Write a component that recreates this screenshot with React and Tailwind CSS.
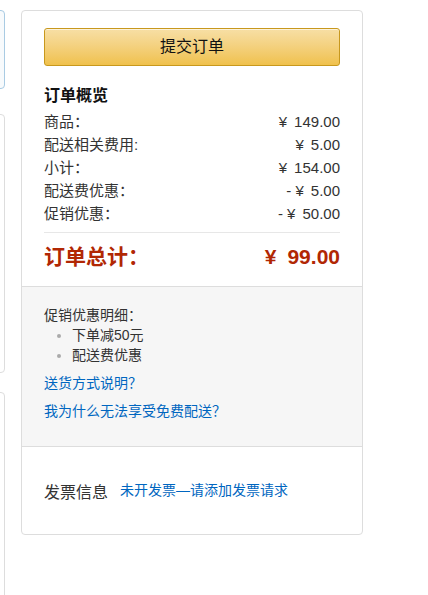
import React from 'react'

const rows = [
  ['商品：', '', '149.00'],
  ['配送相关费用:', '', '5.00'],
  ['小计：', '', '154.00'],
  ['配送费优惠：', '- ', '5.00'],
  ['促销优惠：', '- ', '50.00'],
]

const font = { fontFamily: '"Liberation Sans", Arial, "Noto Sans CJK SC", sans-serif' }

function SideBoxes() {
  return (
    <div className="flex w-[5px] shrink-0 flex-col">
      <div className="ml-[-195px] h-[79px] w-[200px] shrink-0 rounded-[4px] border border-[#a9cbe3] bg-[#f7fafc]" />
      <div className="ml-[-195px] mt-[25px] h-[259px] w-[200px] shrink-0 rounded-[4px] border border-[#dddddd] bg-white" />
      <div className="ml-[-195px] mt-[19px] h-[300px] w-[200px] shrink-0 rounded-[4px] border border-[#dddddd] bg-white" />
    </div>
  )
}

export default function App() {
  return (
    <div className="flex h-[595px] gap-[16px] overflow-hidden bg-white pt-[10px] text-[#333]" style={font}>
      <SideBoxes />
      <div className="h-fit w-[342px] shrink-0 overflow-hidden rounded-[4px] border border-[#dddddd]">
        <div className="px-[22px] pt-[17px] pb-[15px]">
          <button className="flex h-[38px] w-full items-center justify-center rounded-[3px] border border-[#c8981d] bg-gradient-to-b from-[#f7dfa5] to-[#f0c14b] text-[16px] text-[#111] shadow-[inset_0_1px_0_rgba(255,255,255,0.6)]">
            提交订单
          </button>
          <h3 className="mt-[18px] text-[16px] font-bold leading-[24px] text-[#111]">订单概览</h3>
          <div className="mt-[2px] text-[15px] leading-[23px]">
            {rows.map(([label, sign, amount]) => (
              <div key={label} className="flex justify-between">
                <span>{label}</span>
                <span>
                  {sign}¥<span className="ml-[7px]">{amount}</span>
                </span>
              </div>
            ))}
          </div>
          <div className="mt-[7px] border-t border-[#e7e7e7]" />
          <div className="mt-[10px] flex justify-between text-[21px] font-bold leading-[28px] text-[#b12704]">
            <span>订单总计：</span>
            <span>¥<span className="ml-[11px]">99.00</span></span>
          </div>
        </div>
        <div className="border-y border-[#dddddd] bg-[#f6f6f6] px-[22px] pt-[18px] pb-[25px] text-[14px] leading-[20px]">
          <div>促销优惠明细：</div>
          <ul className="ml-[28px] list-disc marker:text-[#aaaaaa]">
            <li>下单减50元</li>
            <li>配送费优惠</li>
          </ul>
          <a className="mt-[8px] block text-[#0066c0]" href="#">送货方式说明？</a>
          <a className="mt-[8px] block text-[#0066c0]" href="#">我为什么无法享受免费配送？</a>
        </div>
        <div className="flex items-start gap-[12px] px-[22px] pt-[35px] pb-[30px]">
          <span className="text-[16px] leading-[22px]">发票信息</span>
          <a className="text-[14px] leading-[16px] text-[#0066c0]" href="#">未开发票—请添加发票请求</a>
        </div>
      </div>
    </div>
  )
}
